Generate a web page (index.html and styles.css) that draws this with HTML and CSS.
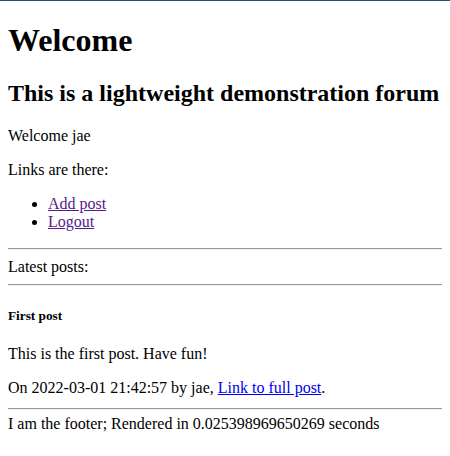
FILE: index.html
```html
<!DOCTYPE html>
<html>
<head>
<meta charset="utf-8">
<title>Forum</title>
<link rel="stylesheet" href="styles.css">
</head>
<body>
<div class="topline"></div>
<h1>Welcome</h1>
<h2>This is a lightweight demonstration forum</h2>
<p class="greet">Welcome jae</p>
<p>Links are there:</p>
<ul class="links">
<li><a class="visited" href="#add">Add post</a></li>
<li><a class="visited" href="#logout">Logout</a></li>
</ul>
<hr>
<div class="latest">Latest posts:</div>
<hr>
<h5>First post</h5>
<p>This is the first post. Have fun!</p>
<p class="meta">On 2022-03-01 21:42:57 by jae, <a class="link" href="#post1">Link to full post</a>.</p>
<hr class="foot-rule">
<div class="footer">I am the footer; Rendered in 0.025398969650269 seconds</div>
</body>
</html>
```
FILE: styles.css
```css
html {
  background: #fff;
}
body {
  margin: 8px;
  font-family: "Liberation Serif", "Times New Roman", serif;
  font-size: 16px;
  line-height: 18px;
  color: #000;
}
.topline {
  position: absolute;
  top: 0;
  left: 0;
  right: 0;
  height: 1px;
  background: #2c4a6a;
}
h1 {
  font-size: 32px;
  line-height: 37px;
  margin: 14px 0 20px;
}
h2 {
  font-size: 24px;
  line-height: 28px;
  margin: 20px 0;
}
h5 {
  font-size: 13.28px;
  line-height: 15px;
  margin: 22px 0;
}
p {
  margin: 16px 0;
}
p.meta {
  margin: 15px 0 11px;
}
ul {
  margin: 16px 0 17px;
  padding-left: 40px;
}
hr {
  margin: 8px 0;
  border: none;
  border-top: 1px solid #9a9a9a;
  border-bottom: 1px solid #eeeeee;
}
hr.foot-rule {
  margin-bottom: 5px;
}
a.visited {
  color: #551a8b;
}
a.link {
  color: #0000ee;
}
```
